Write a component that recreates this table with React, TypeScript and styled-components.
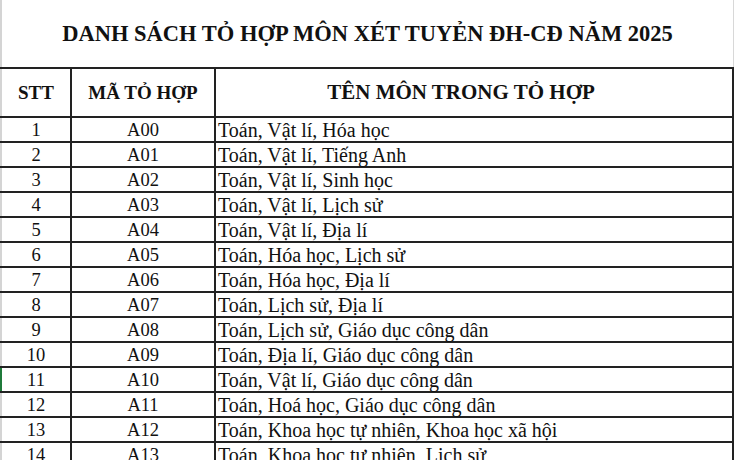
import styled, { createGlobalStyle } from "styled-components";

const GlobalStyle = createGlobalStyle`
  html, body {
    margin: 0;
    padding: 0;
    background: #ffffff;
  }
  body {
    font-family: "Liberation Serif", "Times New Roman", serif;
    color: #111111;
    overflow: hidden;
  }
`;

const Sheet = styled.div`
  width: 736px;
  height: 460px;
  overflow: hidden;
  background: #ffffff;
`;

const TitleBar = styled.div`
  height: 67px;
  box-sizing: border-box;
  padding-top: 20px;
  border-left: 2px solid #d4d4d4;
  border-right: 1px solid #d8d8d8;
  width: 734px;
  text-align: center;
  font-size: 22.5px;
  font-weight: 700;
  line-height: 28px;
  white-space: nowrap;
`;

const Table = styled.table`
  width: 734px;
  border-collapse: collapse;
  table-layout: fixed;
  font-size: 18.5px;
`;

const HeadCell = styled.th<{ $shift?: number; $size?: number }>`
  height: 47px;
  padding: 0 ${(p) => p.$shift ?? 0}px 0 0;
  border-top: 2px solid #222;
  border-bottom: 2px solid #222;
  border-right: 2px solid #222;
  font-weight: 700;
  font-size: ${(p) => p.$size ?? 19}px;
  text-align: center;
  vertical-align: middle;
  white-space: nowrap;
  &:first-child {
    border-left: 2px solid #d4d4d4;
  }
`;

const Row = styled.tr`
  height: 25px;
`;

const Cell = styled.td<{ $align: "center" | "left"; $active?: boolean }>`
  padding: 0 0 0 ${(p) => (p.$align === "left" ? 2 : 0)}px;
  border-bottom: 2px solid #222;
  border-right: 2px solid #222;
  text-align: ${(p) => p.$align};
  font-size: ${(p) => (p.$align === "left" ? 20 : 18.5)}px;
  vertical-align: middle;
  line-height: 22px;
  white-space: nowrap;
  &:first-child {
    border-left: 2px solid ${(p) => (p.$active ? "#1f7a3a" : "#d4d4d4")};
  }
`;

const rows: [number, string, string][] = [
  [1, "A00", "Toán, Vật lí, Hóa học"],
  [2, "A01", "Toán, Vật lí, Tiếng Anh"],
  [3, "A02", "Toán, Vật lí, Sinh học"],
  [4, "A03", "Toán, Vật lí, Lịch sử"],
  [5, "A04", "Toán, Vật lí, Địa lí"],
  [6, "A05", "Toán, Hóa học, Lịch sử"],
  [7, "A06", "Toán, Hóa học, Địa lí"],
  [8, "A07", "Toán, Lịch sử, Địa lí"],
  [9, "A08", "Toán, Lịch sử, Giáo dục công dân"],
  [10, "A09", "Toán, Địa lí, Giáo dục công dân"],
  [11, "A10", "Toán, Vật lí, Giáo dục công dân"],
  [12, "A11", "Toán, Hoá học, Giáo dục công dân"],
  [13, "A12", "Toán, Khoa học tự nhiên, Khoa học xã hội"],
  [14, "A13", "Toán, Khoa học tự nhiên, Lịch sử"],
];

export default function App() {
  return (
    <Sheet>
      <GlobalStyle />
      <TitleBar>DANH SÁCH TỎ HỢP MÔN XÉT TUYẺN ĐH-CĐ NĂM 2025</TitleBar>
      <Table>
        <colgroup>
          <col style={{ width: 70 }} />
          <col style={{ width: 144 }} />
          <col />
        </colgroup>
        <thead>
          <tr>
            <HeadCell>STT</HeadCell>
            <HeadCell>MÃ TỎ HỢP</HeadCell>
            <HeadCell $shift={26} $size={21}>
              TÊN MÔN TRONG TỎ HỢP
            </HeadCell>
          </tr>
        </thead>
        <tbody>
          {rows.map(([n, code, subjects]) => (
            <Row key={code}>
              <Cell $align="center" $active={n === 11}>
                {n}
              </Cell>
              <Cell $align="center">{code}</Cell>
              <Cell $align="left">{subjects}</Cell>
            </Row>
          ))}
        </tbody>
      </Table>
    </Sheet>
  );
}
